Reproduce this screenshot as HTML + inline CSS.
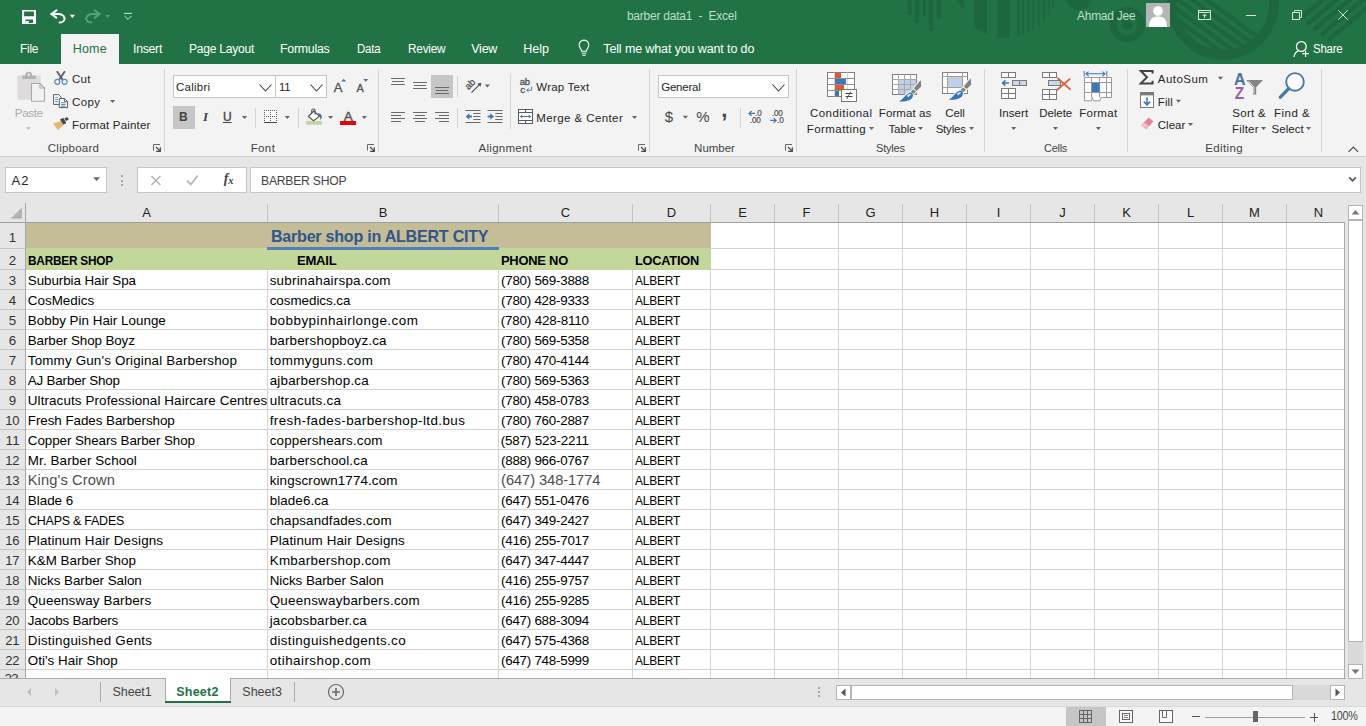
<!DOCTYPE html>
<html lang="en"><head><meta charset="utf-8"><title>barber data1 - Excel</title>
<style>
html,body{margin:0;padding:0;}
body{width:1366px;height:726px;overflow:hidden;position:relative;background:#e6e6e6;font-family:'Liberation Sans',sans-serif;color:#262626;}
header,nav,section,main,footer{display:block;position:static;margin:0;padding:0;}
.t{position:absolute;white-space:pre;}
svg{position:absolute;overflow:visible;}
</style></head><body>
<header class="titlebar" aria-label="Title bar">
<div style="position:absolute;left:0px;top:0px;width:1366px;height:64px;background:#217346;"></div>
<svg style="left:0;top:0" width="1366" height="64" viewBox="0 0 1366 64">
<defs><clipPath id="cpA"><circle cx="1006" cy="-14" r="52"/></clipPath><clipPath id="cpB"><circle cx="1223" cy="3.6" r="46.5"/></clipPath><clipPath id="cpT"><rect x="0" y="0" width="1366" height="64"/></clipPath></defs>
<g fill="#1e673e" clip-path="url(#cpT)">
<rect x="908" y="0" width="3.5" height="15"/><rect x="915" y="0" width="4" height="23"/><rect x="923" y="0" width="3" height="16"/><rect x="929" y="0" width="4" height="31"/><rect x="937" y="0" width="4" height="19"/>
<path d="M956 0 L964 0 L964 10 Z"/>
<g clip-path="url(#cpA)"><rect x="974" y="0" width="13" height="40"/><rect x="997.5" y="0" width="12.5" height="40"/>
<rect x="1017.5" y="0" width="2" height="40"/><rect x="1022" y="0" width="2" height="40"/><rect x="1027.5" y="0" width="2" height="40"/><rect x="1032.5" y="0" width="1.6" height="40"/><rect x="1038" y="0" width="1.6" height="40"/><rect x="1043.5" y="0" width="1.6" height="40"/><rect x="1048.5" y="0" width="1.5" height="40"/><rect x="1052.5" y="0" width="1.4" height="40"/></g>
<circle cx="1079" cy="-3" r="13"/>
<circle cx="1127.2" cy="24.6" r="14" fill="none" stroke="#1e673e" stroke-width="7"/><circle cx="1127.2" cy="24.6" r="5.5"/>
<circle cx="1223" cy="3.6" r="51" fill="none" stroke="#1e673e" stroke-width="10"/>
<g clip-path="url(#cpB)" stroke="#1e673e" stroke-width="4.6" fill="none"><path d="M1170.6 -26.4 L1267.7 44.1 M1165.7 -19.6 L1262.8 50.9 M1160.8 -12.8 L1257.8 57.7 M1155.8 -6.0 L1252.9 64.5 M1150.9 0.8 L1248.0 71.3"/></g>
<g stroke="#1e673e" stroke-width="4.6" fill="none"><path d="M1300.0 19.0 L1368.9 -38.9 M1307.1 24.3 L1376.0 -33.5 M1314.1 29.6 L1383.1 -28.2 M1321.2 34.9 L1390.1 -22.9 M1328.2 40.2 L1397.2 -17.6"/></g>
</g></svg>
<svg style="left:22px;top:10px" width="14" height="14" viewBox="0 0 14 14"><path fill-rule="evenodd" fill="#ffffff" d="M0 0 H14 V14 H0 Z M2.1 1.4 V6.2 H12 V1.4 Z M3.4 9.6 V12.9 H11 V9.6 Z"/><rect x="3.4" y="11" width="3.4" height="1.9" fill="#ffffff"/></svg>
<svg style="left:50px;top:9px" width="26" height="16" viewBox="0 0 26 16"><path d="M1.4 5 H8.6 C12.8 5 15.4 8 14.3 11 C13.5 13 11.6 13.5 9.6 13.5" fill="none" stroke="#ffffff" stroke-width="2" stroke-linecap="round"/><path d="M6.5 1.4 L1.3 5 L6.3 8.6" fill="none" stroke="#ffffff" stroke-width="2" stroke-linecap="round" stroke-linejoin="round"/><path d="M19.8 5.8 h5.2 l-2.6 3.2 z" fill="#ffffff"/></svg>
<svg style="left:85px;top:9px" width="26" height="16" viewBox="0 0 26 16"><path d="M14.6 5 H7.2 C3 5 0.4 8 1.5 11 C2.3 13 4.2 13.5 6.4 13.5" fill="none" stroke="#58a07b" stroke-width="2" stroke-linecap="round"/><path d="M9.6 1.4 L14.8 5 L9.8 8.6" fill="none" stroke="#58a07b" stroke-width="2" stroke-linecap="round" stroke-linejoin="round"/><path d="M20.2 6 h4.8 l-2.4 3 z" fill="#58a07b"/></svg>
<svg style="left:123px;top:12px" width="10" height="9" viewBox="0 0 10 9"><path d="M1 1.4 H9" stroke="#cfe5d8" stroke-width="1"/><path d="M1.6 4 L5 7.4 L8.4 4" fill="none" stroke="#cfe5d8" stroke-width="1"/></svg>
<svg style="left:1146px;top:3px" width="24" height="24" viewBox="0 0 24 24"><rect width="24" height="24" fill="#b5b5b5"/><circle cx="12" cy="8" r="4.8" fill="#fff"/><path d="M3 24 C3 15.5 7 13.6 12 13.6 C17 13.6 21 15.5 21 24 Z" fill="#fff"/></svg>
<svg style="left:1198px;top:10px" width="13" height="10" viewBox="0 0 13 10"><rect x="0.5" y="0.5" width="12" height="9" fill="none" stroke="#d3e6da" stroke-width="1"/><path d="M0.5 2.5 H12.5" stroke="#d3e6da" stroke-width="1"/><path d="M6.5 8 V4.2 M4.6 6 L6.5 4.1 L8.4 6" fill="none" stroke="#d3e6da" stroke-width="1"/></svg>
<div style="position:absolute;left:1246px;top:15px;width:10px;height:1px;background:#d3e6da;"></div>
<svg style="left:1292px;top:10px" width="10" height="10" viewBox="0 0 10 10"><rect x="0.5" y="2.5" width="7" height="7" fill="none" stroke="#d3e6da" stroke-width="1"/><path d="M2.5 2.5 V0.5 H9.5 V7.5 H7.5" fill="none" stroke="#d3e6da" stroke-width="1"/></svg>
<svg style="left:1338px;top:10px" width="10" height="10" viewBox="0 0 10 10"><path d="M0.3 0.3 L9.7 9.7 M9.7 0.3 L0.3 9.7" stroke="#d3e6da" stroke-width="1"/></svg>
<span class="t" style="left:626.88px;top:8.00px;font-size:12px;line-height:16px;letter-spacing:-0.222px;color:#b9dfc9;">barber data1  -  Excel</span>
<span class="t" style="left:1076.78px;top:8.00px;font-size:12px;line-height:16px;letter-spacing:-0.250px;transform:scaleX(0.9979);transform-origin:0 50%;color:#b9dfc9;">Ahmad Jee</span>
</header>
<nav class="tabs" aria-label="Ribbon tabs">
<div style="position:absolute;left:61px;top:34px;width:58px;height:30px;background:#f3f3f3;"></div>
<svg style="left:577px;top:39px" width="14" height="18" viewBox="0 0 14 18"><path d="M4.6 12.2 C4.6 10 2.2 9 2.2 5.9 A4.8 4.8 0 0 1 11.8 5.9 C11.8 9 9.4 10 9.4 12.2 Z" fill="none" stroke="#ffffff" stroke-width="1.1"/><path d="M4.8 14.2 H9.2 M5.3 16.2 H8.7" stroke="#ffffff" stroke-width="1.1"/></svg>
<svg style="left:1293px;top:40px" width="17" height="18" viewBox="0 0 17 18"><circle cx="8.3" cy="6.5" r="4.9" fill="none" stroke="#ffffff" stroke-width="1.2"/><path d="M1 17 C1.4 13.4 3.4 11.6 5.4 10.8" fill="none" stroke="#ffffff" stroke-width="1.2"/><path d="M12.6 10.4 V17 M9.3 13.7 H15.9" stroke="#ffffff" stroke-width="1.2"/></svg>
<span class="t" style="left:19.75px;top:41.00px;font-size:12.5px;line-height:16px;letter-spacing:-0.250px;transform:scaleX(0.9494);transform-origin:0 50%;color:#ffffff;">File</span>
<span class="t" style="left:72.65px;top:41.00px;font-size:12.5px;line-height:16px;letter-spacing:0.227px;color:#217346;">Home</span>
<span class="t" style="left:132.85px;top:41.00px;font-size:12.5px;line-height:16px;letter-spacing:-0.250px;transform:scaleX(0.9770);transform-origin:0 50%;color:#ffffff;">Insert</span>
<span class="t" style="left:188.85px;top:41.00px;font-size:12.5px;line-height:16px;letter-spacing:-0.250px;transform:scaleX(0.9664);transform-origin:0 50%;color:#ffffff;">Page Layout</span>
<span class="t" style="left:280.45px;top:41.00px;font-size:12.5px;line-height:16px;letter-spacing:-0.250px;transform:scaleX(0.9877);transform-origin:0 50%;color:#ffffff;">Formulas</span>
<span class="t" style="left:356.75px;top:41.00px;font-size:12.5px;line-height:16px;letter-spacing:-0.250px;transform:scaleX(0.9208);transform-origin:0 50%;color:#ffffff;">Data</span>
<span class="t" style="left:407.75px;top:41.00px;font-size:12.5px;line-height:16px;letter-spacing:-0.250px;transform:scaleX(0.9465);transform-origin:0 50%;color:#ffffff;">Review</span>
<span class="t" style="left:471.25px;top:41.00px;font-size:12.5px;line-height:16px;letter-spacing:-0.250px;color:#ffffff;">View</span>
<span class="t" style="left:523.25px;top:41.00px;font-size:12.5px;line-height:16px;letter-spacing:-0.031px;color:#ffffff;">Help</span>
<span class="t" style="left:603.25px;top:41.00px;font-size:12.5px;line-height:16px;letter-spacing:-0.120px;color:#ffffff;">Tell me what you want to do</span>
<span class="t" style="left:1312.75px;top:41.00px;font-size:12.5px;line-height:16px;letter-spacing:-0.250px;transform:scaleX(0.9155);transform-origin:0 50%;color:#ffffff;">Share</span>
</nav>
<section class="ribbon" aria-label="Ribbon">
<div style="position:absolute;left:0px;top:64px;width:1366px;height:92px;background:#f3f3f3;"></div>
<div style="position:absolute;left:0px;top:156px;width:1366px;height:1px;background:#d2d2d2;"></div>
<div style="position:absolute;left:173px;top:75px;width:103px;height:23px;background:#fff;box-sizing:border-box;border:1px solid #c6c6c6;"></div>
<div style="position:absolute;left:276px;top:75px;width:51px;height:23px;background:#fff;box-sizing:border-box;border:1px solid #c6c6c6;border-left:none;"></div>
<div style="position:absolute;left:275px;top:76px;width:1px;height:21px;background:#c6c6c6;"></div>
<div style="position:absolute;left:173px;top:106px;width:22px;height:23px;background:#c6c6c6;"></div>
<div style="position:absolute;left:658px;top:75px;width:131px;height:23px;background:#fff;box-sizing:border-box;border:1px solid #c6c6c6;"></div>
<div style="position:absolute;left:164px;top:69px;width:1px;height:83px;background:#d4d4d4;"></div>
<div style="position:absolute;left:378px;top:69px;width:1px;height:83px;background:#d4d4d4;"></div>
<div style="position:absolute;left:649px;top:69px;width:1px;height:83px;background:#d4d4d4;"></div>
<div style="position:absolute;left:796px;top:69px;width:1px;height:83px;background:#d4d4d4;"></div>
<div style="position:absolute;left:984px;top:69px;width:1px;height:83px;background:#d4d4d4;"></div>
<div style="position:absolute;left:1127px;top:69px;width:1px;height:83px;background:#d4d4d4;"></div>
<div style="position:absolute;left:1321px;top:69px;width:1px;height:83px;background:#d4d4d4;"></div>
<div style="position:absolute;left:255px;top:108px;width:1px;height:20px;background:#d4d4d4;"></div>
<div style="position:absolute;left:298px;top:108px;width:1px;height:20px;background:#d4d4d4;"></div>
<div style="position:absolute;left:457px;top:108px;width:1px;height:20px;background:#d4d4d4;"></div>
<div style="position:absolute;left:740px;top:108px;width:1px;height:20px;background:#d4d4d4;"></div>
<div style="position:absolute;left:457px;top:76px;width:1px;height:21px;background:#d4d4d4;"></div>
<div style="position:absolute;left:510px;top:74px;width:1px;height:55px;background:#d4d4d4;"></div>
<div style="position:absolute;left:431px;top:75px;width:22px;height:23px;background:#c6c6c6;"></div>
<svg style="left:17px;top:71px" width="29" height="32" viewBox="0 0 29 32"><rect x="0.3" y="4.4" width="23.4" height="24.4" rx="0.6" fill="#dddbdb"/><path d="M5.4 8 V4.6 H8.4 V3.6 A3.2 2.8 0 0 1 15 3.6 V4.6 H18.8 V8 Z" fill="#b4b2b2"/><circle cx="11.7" cy="3.8" r="1.2" fill="#eeeeee"/>
<path d="M14.5 12.5 H23 L27.5 17 V30.3 H14.5 Z" fill="#f3f2f2" stroke="#aaa8a8" stroke-width="1.1"/><path d="M23 12.5 V17 H27.5" fill="none" stroke="#aaa8a8" stroke-width="1.1"/></svg>
<svg style="left:25px;top:126px" width="8" height="6" viewBox="0 0 8 6"><path d="M1.30 1.30 h4.4 l-2.2 2.4 z" fill="#b5b5b5"/></svg>
<svg style="left:53px;top:70px" width="16" height="16" viewBox="0 0 16 16"><path d="M3.9 1.2 L9.6 9.6 M11.9 1.2 L6.2 9.6" stroke="#636363" stroke-width="1.9" fill="none"/><circle cx="4.3" cy="11.8" r="2.5" fill="none" stroke="#4f8bcc" stroke-width="1.15"/><circle cx="11.6" cy="11.8" r="2.5" fill="none" stroke="#4f8bcc" stroke-width="1.15"/></svg>
<svg style="left:52px;top:93px" width="17" height="16" viewBox="0 0 17 16"><path d="M1.6 1.6 H6.6 L9.2 4.2 V11.4 H1.6 Z" fill="#fff" stroke="#5a5a5a" stroke-width="1"/><path d="M3.2 4.6 H5.6 M3.2 6.6 H6 M3.2 8.6 H6" stroke="#3b7cc2" stroke-width="0.9"/>
<path d="M7.3 5.5 H12.6 L15.5 8.4 V14.6 H7.3 Z" fill="#fff" stroke="#5a5a5a" stroke-width="1"/><path d="M12.4 5.6 V8.6 H15.4" fill="none" stroke="#5a5a5a" stroke-width="0.9"/><path d="M9 9.8 H13.6 M9 11.6 H13.6 M9 13.2 H13.6" stroke="#3b7cc2" stroke-width="0.9"/></svg>
<svg style="left:109px;top:99px" width="8" height="6" viewBox="0 0 8 6"><path d="M1.00 1.10 h5.2 l-2.6 3 z" fill="#666"/></svg>
<svg style="left:52px;top:116px" width="18" height="15" viewBox="0 0 18 15"><path d="M1 7.6 L8.8 5.2 L11.4 9.2 L6 14 Z" fill="#e6b566"/><path d="M8 3.6 L11.2 1.8 L14.4 7 L11.2 8.8 Z" fill="#4a4a4a"/><path d="M12.4 2.6 L15.2 0.9 L16.8 3.4 L14 5.1 Z" fill="#4a4a4a"/></svg>
<svg style="left:153px;top:144px" width="8" height="8" viewBox="0 0 8 8"><path d="M0.5 6.6 V0.5 H7" fill="none" stroke="#666" stroke-width="1"/><path d="M3 3 L7 7" stroke="#444" stroke-width="1.1"/><path d="M7.3 3.2 V7.3 H3.2" fill="none" stroke="#444" stroke-width="1.2"/></svg>
<svg style="left:259px;top:83.5px" width="13" height="8" viewBox="0 0 13 8"><path d="M0.5 0.5 L6.5 7 L12.5 0.5" fill="none" stroke="#444" stroke-width="1.1"/></svg>
<svg style="left:310px;top:83.5px" width="13" height="8" viewBox="0 0 13 8"><path d="M0.5 0.5 L6.5 7 L12.5 0.5" fill="none" stroke="#444" stroke-width="1.1"/></svg>
<svg style="left:341px;top:78px" width="6" height="4" viewBox="0 0 6 4"><path d="M0.2 3.6 L2.7 0.8 L5.2 3.6 Z" fill="#4a72a8"/></svg>
<svg style="left:363px;top:78px" width="6" height="4" viewBox="0 0 6 4"><path d="M0.2 0.9 L5.4 0.9 L2.8 3.8 Z" fill="#4a72a8"/></svg>
<svg style="left:241px;top:115px" width="8" height="6" viewBox="0 0 8 6"><path d="M0.90 0.90 h5.2 l-2.6 3 z" fill="#666"/></svg>
<svg style="left:264px;top:110px" width="14" height="14" viewBox="0 0 14 14"><rect x="0" y="0" width="13" height="13" fill="#fff"/><g fill="#5a5a5a"><rect x="0" y="0" width="1" height="1"/><rect x="2" y="0" width="1" height="1"/><rect x="4" y="0" width="1" height="1"/><rect x="6" y="0" width="1" height="1"/><rect x="8" y="0" width="1" height="1"/><rect x="10" y="0" width="1" height="1"/><rect x="12" y="0" width="1" height="1"/><rect x="0" y="2" width="1" height="1"/><rect x="6" y="2" width="1" height="1"/><rect x="12" y="2" width="1" height="1"/><rect x="0" y="4" width="1" height="1"/><rect x="6" y="4" width="1" height="1"/><rect x="12" y="4" width="1" height="1"/><rect x="0" y="6" width="1" height="1"/><rect x="2" y="6" width="1" height="1"/><rect x="4" y="6" width="1" height="1"/><rect x="6" y="6" width="1" height="1"/><rect x="8" y="6" width="1" height="1"/><rect x="10" y="6" width="1" height="1"/><rect x="12" y="6" width="1" height="1"/><rect x="0" y="8" width="1" height="1"/><rect x="6" y="8" width="1" height="1"/><rect x="12" y="8" width="1" height="1"/><rect x="0" y="10" width="1" height="1"/><rect x="6" y="10" width="1" height="1"/><rect x="12" y="10" width="1" height="1"/></g><rect x="0" y="12" width="13" height="1" fill="#444"/></svg>
<svg style="left:284px;top:115px" width="8" height="6" viewBox="0 0 8 6"><path d="M0.70 0.90 h5.2 l-2.6 3 z" fill="#666"/></svg>
<svg style="left:306px;top:108px" width="17" height="18" viewBox="0 0 17 18"><rect x="0.1" y="13" width="15.9" height="3.7" fill="#c4d79b"/><path d="M2.3 8.5 L7.8 3 L13.3 8.4 L7.6 12.7 Z" fill="#fff" stroke="#555" stroke-width="1.1" stroke-linejoin="round"/><path d="M5.7 5.2 V2.7 A1.7 1.7 0 0 1 9.1 2.7 V6.6" fill="none" stroke="#555" stroke-width="1.1"/><path d="M11.6 5.2 C14.6 5 16.6 7.4 15.6 10 C15.2 11 14.8 11.6 14.3 11.9 C14.5 10.4 14.2 9.2 13.3 8.4 Z" fill="#4472b8"/></svg>
<svg style="left:327px;top:115px" width="8" height="6" viewBox="0 0 8 6"><path d="M1.00 0.90 h5.2 l-2.6 3 z" fill="#666"/></svg>
<div style="position:absolute;left:340px;top:121px;width:16px;height:4px;background:#e8000a;"></div>
<svg style="left:361px;top:115px" width="8" height="6" viewBox="0 0 8 6"><path d="M0.80 0.90 h5.2 l-2.6 3 z" fill="#666"/></svg>
<svg style="left:367px;top:144px" width="8" height="8" viewBox="0 0 8 8"><path d="M0.5 6.6 V0.5 H7" fill="none" stroke="#666" stroke-width="1"/><path d="M3 3 L7 7" stroke="#444" stroke-width="1.1"/><path d="M7.3 3.2 V7.3 H3.2" fill="none" stroke="#444" stroke-width="1.2"/></svg>
<svg style="left:391px;top:0px" width="16" height="160" viewBox="0 0 16 160"><rect x="0" y="78.0" width="14" height="1" fill="#6a6a6a"/><rect x="1" y="81.0" width="12" height="1" fill="#6a6a6a"/><rect x="0" y="84.0" width="14" height="1" fill="#6a6a6a"/></svg>
<svg style="left:413px;top:0px" width="16" height="160" viewBox="0 0 16 160"><rect x="0" y="82.0" width="14" height="1" fill="#6a6a6a"/><rect x="1" y="85.0" width="12" height="1" fill="#6a6a6a"/><rect x="0" y="88.0" width="14" height="1" fill="#6a6a6a"/></svg>
<svg style="left:435px;top:0px" width="16" height="160" viewBox="0 0 16 160"><rect x="0" y="87.0" width="14" height="1" fill="#6a6a6a"/><rect x="1" y="90.0" width="12" height="1" fill="#6a6a6a"/><rect x="0" y="93.0" width="14" height="1" fill="#6a6a6a"/></svg>
<svg style="left:391px;top:0px" width="16" height="160" viewBox="0 0 16 160"><rect x="0" y="112.0" width="14" height="1" fill="#6a6a6a"/><rect x="0" y="115.0" width="10" height="1" fill="#6a6a6a"/><rect x="0" y="118.0" width="14" height="1" fill="#6a6a6a"/><rect x="0" y="121.0" width="10" height="1" fill="#6a6a6a"/></svg>
<svg style="left:413px;top:0px" width="16" height="160" viewBox="0 0 16 160"><rect x="0" y="112.0" width="14" height="1" fill="#6a6a6a"/><rect x="2" y="115.0" width="10" height="1" fill="#6a6a6a"/><rect x="0" y="118.0" width="14" height="1" fill="#6a6a6a"/><rect x="2" y="121.0" width="10" height="1" fill="#6a6a6a"/></svg>
<svg style="left:435px;top:0px" width="16" height="160" viewBox="0 0 16 160"><rect x="0" y="112.0" width="14" height="1" fill="#6a6a6a"/><rect x="4" y="115.0" width="10" height="1" fill="#6a6a6a"/><rect x="0" y="118.0" width="14" height="1" fill="#6a6a6a"/><rect x="4" y="121.0" width="10" height="1" fill="#6a6a6a"/></svg>
<svg style="left:464px;top:77px" width="20" height="18" viewBox="0 0 20 18"><path d="M7.5 15.6 L16.2 6.9" stroke="#505050" stroke-width="1.2"/><path d="M17.4 5.7 L13.4 6.6 L16.5 9.7 Z" fill="#505050"/><text x="0" y="0" transform="translate(4.6 13.2) rotate(-45)" font-family="Liberation Sans,sans-serif" font-size="9.6" fill="#505050" stroke="#505050" stroke-width="0.25">ab</text></svg>
<svg style="left:484px;top:84px" width="8" height="6" viewBox="0 0 8 6"><path d="M0.80 0.60 h5.2 l-2.6 3 z" fill="#666"/></svg>
<svg style="left:519px;top:78px" width="15" height="16" viewBox="0 0 15 16"><text x="0.8" y="7.4" font-family="Liberation Sans,sans-serif" font-size="9.6" fill="#505050" stroke="#505050" stroke-width="0.3" letter-spacing="-0.3">ab</text><text x="1.2" y="14.6" font-family="Liberation Sans,sans-serif" font-size="9.6" fill="#505050" stroke="#505050" stroke-width="0.3">c</text><path d="M12.6 8.6 V12.2 H8.2" fill="none" stroke="#3b7cc2" stroke-width="1"/><path d="M9.6 10.4 L7.6 12.2 L9.6 14" fill="none" stroke="#3b7cc2" stroke-width="1"/></svg>
<svg style="left:465px;top:109px" width="17" height="15" viewBox="0 0 17 15"><path d="M0.5 1.5 H15.5 M8.3 4.5 H15.5 M8.3 7.5 H15.5 M8.3 10.5 H15.5 M0.5 13.5 H15.5" stroke="#6a6a6a" stroke-width="1"/><path d="M0.6 7.5 L4.4 4.2 V6.5 H7 V8.5 H4.4 V10.8 Z" fill="#4478b8"/></svg>
<svg style="left:487px;top:109px" width="17" height="15" viewBox="0 0 17 15"><path d="M0.5 1.5 H15.5 M8.3 4.5 H15.5 M8.3 7.5 H15.5 M8.3 10.5 H15.5 M0.5 13.5 H15.5" stroke="#6a6a6a" stroke-width="1"/><path d="M7 7.5 L3.2 4.2 V6.5 H0.6 V8.5 H3.2 V10.8 Z" fill="#4478b8"/></svg>
<svg style="left:518px;top:109px" width="15" height="15" viewBox="0 0 15 15"><rect x="0.5" y="0.5" width="14" height="14" fill="#fff" stroke="#5a5a5a" stroke-width="1"/><path d="M0.5 3.5 H14.5 M0.5 11.5 H14.5 M7.5 0.5 V3.5 M7.5 11.5 V14.5" stroke="#5a5a5a" stroke-width="1"/><path d="M2.6 7.5 H12.4" stroke="#4a6fa8" stroke-width="1"/><path d="M2 7.5 L4.2 5.6 V9.4 Z M13 7.5 L10.8 5.6 V9.4 Z" fill="#4a6fa8"/></svg>
<svg style="left:631px;top:115px" width="8" height="6" viewBox="0 0 8 6"><path d="M0.90 0.90 h5.2 l-2.6 3 z" fill="#666"/></svg>
<svg style="left:638px;top:144px" width="8" height="8" viewBox="0 0 8 8"><path d="M0.5 6.6 V0.5 H7" fill="none" stroke="#666" stroke-width="1"/><path d="M3 3 L7 7" stroke="#444" stroke-width="1.1"/><path d="M7.3 3.2 V7.3 H3.2" fill="none" stroke="#444" stroke-width="1.2"/></svg>
<svg style="left:772px;top:84px" width="13" height="8" viewBox="0 0 13 8"><path d="M0.5 0.5 L6.5 7 L12.5 0.5" fill="none" stroke="#444" stroke-width="1.1"/></svg>
<svg style="left:682px;top:115px" width="8" height="6" viewBox="0 0 8 6"><path d="M0.80 0.80 h5.2 l-2.6 3 z" fill="#666"/></svg>
<svg style="left:748px;top:110px" width="16" height="14" viewBox="0 0 16 14"><path d="M7 3.4 H1.2 M3.6 1 L1 3.4 L3.6 5.8" fill="none" stroke="#3d77bb" stroke-width="1.2"/><text x="7" y="6.2" font-family="Liberation Sans,sans-serif" font-size="8.2" fill="#505050" stroke="#505050" stroke-width="0.2">.0</text><text x="2" y="13.4" font-family="Liberation Sans,sans-serif" font-size="8.2" fill="#505050" stroke="#505050" stroke-width="0.2" letter-spacing="-0.3">.00</text></svg>
<svg style="left:770px;top:110px" width="16" height="14" viewBox="0 0 16 14"><text x="2" y="6.2" font-family="Liberation Sans,sans-serif" font-size="8.2" fill="#505050" stroke="#505050" stroke-width="0.2" letter-spacing="-0.3">.00</text><path d="M0.2 10.4 H6 M3.6 8 L6.2 10.4 L3.6 12.8" fill="none" stroke="#3d77bb" stroke-width="1.2"/><text x="7" y="13.4" font-family="Liberation Sans,sans-serif" font-size="8.2" fill="#505050" stroke="#505050" stroke-width="0.2">.0</text></svg>
<svg style="left:785px;top:144px" width="8" height="8" viewBox="0 0 8 8"><path d="M0.5 6.6 V0.5 H7" fill="none" stroke="#666" stroke-width="1"/><path d="M3 3 L7 7" stroke="#444" stroke-width="1.1"/><path d="M7.3 3.2 V7.3 H3.2" fill="none" stroke="#444" stroke-width="1.2"/></svg>
<svg style="left:827px;top:72px" width="31" height="30" viewBox="0 0 31 30"><rect x="0.5" y="0.5" width="27" height="24" fill="#fff" stroke="#808080" stroke-width="1"/>
<path d="M7.5 0.5 V24.5 M20.5 0.5 V24.5" stroke="#d6d6d6" stroke-width="1"/><path d="M0.5 6.5 H27.5 M0.5 12.5 H27.5 M0.5 18.5 H27.5" stroke="#909090" stroke-width="1"/>
<rect x="8" y="1" width="6" height="5" fill="#dd5a33"/><rect x="8" y="7" width="11" height="5" fill="#3d77bb"/><rect x="8" y="13" width="9" height="5" fill="#dd5a33"/><rect x="8" y="19" width="4" height="5" fill="#3d77bb"/>
<rect x="14.5" y="17.5" width="15" height="12" fill="#fff" stroke="#7a7a7a" stroke-width="1"/><path d="M18.5 21.5 H25.5 M18.5 24.5 H25.5" stroke="#444" stroke-width="1"/><path d="M23.8 19.6 L19.8 27" stroke="#444" stroke-width="0.9"/></svg>
<svg style="left:868px;top:126px" width="8" height="6" viewBox="0 0 8 6"><path d="M0.90 1.00 h5.2 l-2.6 3 z" fill="#666"/></svg>
<svg style="left:892px;top:72px" width="32" height="31" viewBox="0 0 32 31"><rect x="0.5" y="2.5" width="24" height="20" fill="#fff" stroke="#808080" stroke-width="1"/><rect x="7" y="8" width="17" height="14" fill="#bdd0e6"/>
<path d="M6.5 2.5 V22.5 M12.5 2.5 V22.5 M18.5 2.5 V22.5 M0.5 7.5 H24.5 M0.5 12.5 H24.5 M0.5 17.5 H24.5" stroke="#a9a9a9" stroke-width="1"/><path d="M28.7 8.0 L29.2 14.5 L24.6 18.9 L21.9 16.2 Z M21.3 17.2 L24.0 19.7 L21.3 21.9 L18.8 19.6 Z M6.8 29.5 C11.5 27.2 13.5 21.7 18.1 20.4 C21.1 20.6 21.9 23.6 19.9 26.2 C17.5 29.0 12.5 29.8 6.8 29.5 Z" fill="#f3f3f3" stroke="#f3f3f3" stroke-width="2.2" stroke-linejoin="round"/><path d="M28.7 8.0 L29.2 14.5 L24.6 18.9 L21.9 16.2 Z" fill="#808080"/><path d="M21.3 17.2 L24.0 19.7 L21.3 21.9 L18.8 19.6 Z" fill="#808080"/><path d="M6.8 29.5 C11.5 27.2 13.5 21.7 18.1 20.4 C21.1 20.6 21.9 23.6 19.9 26.2 C17.5 29.0 12.5 29.8 6.8 29.5 Z" fill="#3573bd"/><path d="M14.9 23.8 C16.3 22.0 18.3 21.6 19.7 22.8 C18.3 22.8 17.1 23.8 16.5 25.4 Z" fill="#e4edf8"/></svg>
<svg style="left:917px;top:126px" width="8" height="6" viewBox="0 0 8 6"><path d="M1.00 1.00 h5.2 l-2.6 3 z" fill="#666"/></svg>
<svg style="left:942px;top:72px" width="32" height="31" viewBox="0 0 32 31"><rect x="0.5" y="0.5" width="25" height="21" fill="#fff" stroke="#808080" stroke-width="1"/><rect x="6" y="5" width="14" height="10" fill="#bdd0e6"/>
<path d="M5.5 0.5 V21.5 M20.5 0.5 V21.5 M0.5 4.5 H25.5 M0.5 15.5 H25.5" stroke="#a0a0a0" stroke-width="1"/><path d="M28.7 6.2 L29.2 12.7 L24.6 17.1 L21.9 14.4 Z M21.3 15.4 L24.0 17.9 L21.3 20.1 L18.8 17.8 Z M6.8 27.7 C11.5 25.4 13.5 19.9 18.1 18.6 C21.1 18.8 21.9 21.8 19.9 24.4 C17.5 27.2 12.5 28.0 6.8 27.7 Z" fill="#f3f3f3" stroke="#f3f3f3" stroke-width="2.2" stroke-linejoin="round"/><path d="M28.7 6.2 L29.2 12.7 L24.6 17.1 L21.9 14.4 Z" fill="#808080"/><path d="M21.3 15.4 L24.0 17.9 L21.3 20.1 L18.8 17.8 Z" fill="#808080"/><path d="M6.8 27.7 C11.5 25.4 13.5 19.9 18.1 18.6 C21.1 18.8 21.9 21.8 19.9 24.4 C17.5 27.2 12.5 28.0 6.8 27.7 Z" fill="#3573bd"/><path d="M14.9 22.0 C16.3 20.2 18.3 19.8 19.7 21.0 C18.3 21.0 17.1 22.0 16.5 23.6 Z" fill="#e4edf8"/></svg>
<svg style="left:968px;top:126px" width="8" height="6" viewBox="0 0 8 6"><path d="M1.00 1.00 h5.2 l-2.6 3 z" fill="#666"/></svg>
<svg style="left:1001px;top:72px" width="27" height="28" viewBox="0 0 27 28"><rect x="0.5" y="0.5" width="14" height="5" fill="#fff" stroke="#7a7a7a" stroke-width="1"/><path d="M7.5 0.5 V5.5" stroke="#7a7a7a"/>
<rect x="11.5" y="8.5" width="14" height="5" fill="#c8d8ea" stroke="#7a7a7a" stroke-width="1"/><path d="M18.5 8.5 V13.5" stroke="#7a7a7a"/>
<path d="M8 11 H1.6 M4.4 8.4 L1.6 11 L4.4 13.6" fill="none" stroke="#3d77bb" stroke-width="1.6"/>
<rect x="0.5" y="16.5" width="14" height="10" fill="#fff" stroke="#7a7a7a" stroke-width="1"/><path d="M7.5 16.5 V26.5 M0.5 21.5 H14.5" stroke="#7a7a7a"/></svg>
<svg style="left:1010px;top:126px" width="8" height="6" viewBox="0 0 8 6"><path d="M1.10 1.10 h5.2 l-2.6 3 z" fill="#666"/></svg>
<svg style="left:1042px;top:72px" width="30" height="29" viewBox="0 0 30 29"><rect x="0.5" y="0.5" width="14" height="5" fill="#fff" stroke="#7a7a7a" stroke-width="1"/><path d="M7.5 0.5 V5.5" stroke="#7a7a7a"/>
<rect x="6.5" y="8.5" width="12" height="5" fill="#c8d8ea" stroke="#7a7a7a" stroke-width="1"/>
<rect x="0.5" y="17.5" width="14" height="10" fill="#fff" stroke="#7a7a7a" stroke-width="1"/><path d="M7.5 17.5 V27.5 M0.5 22.5 H14.5" stroke="#7a7a7a"/>
<path d="M15.4 6 L28.6 17.6 M28.2 6.6 L15 18" stroke="#d9613c" stroke-width="1.8" fill="none"/></svg>
<svg style="left:1052px;top:126px" width="8" height="6" viewBox="0 0 8 6"><path d="M0.80 1.10 h5.2 l-2.6 3 z" fill="#666"/></svg>
<svg style="left:1083px;top:70px" width="30" height="33" viewBox="0 0 30 33"><path d="M1.2 1 V6.6 M23.8 1 V6.6" stroke="#3d77bb" stroke-width="1"/><path d="M3 3.8 H22 M5.6 1.6 L3 3.8 L5.6 6 M19.4 1.6 L22 3.8 L19.4 6" fill="none" stroke="#3d77bb" stroke-width="1.1"/>
<path d="M1.5 7.5 H28.5 V27.5 H18 L17 30.8 H10.6 L9.4 27.5 L8.4 30.8 H1.5 Z" fill="#fff" stroke="#9a9a9a" stroke-width="1"/>
<path d="M8.5 7.5 V27.5 M16.5 7.5 V27.5 M23.5 7.5 V27.5 M1.5 12.5 H28.5 M1.5 22.5 H28.5" stroke="#9a9a9a" stroke-width="1"/><rect x="9" y="13" width="7.5" height="9" fill="#3d77bb"/></svg>
<svg style="left:1095px;top:126px" width="8" height="6" viewBox="0 0 8 6"><path d="M0.80 1.10 h5.2 l-2.6 3 z" fill="#666"/></svg>
<svg style="left:1139px;top:70px" width="15" height="15" viewBox="0 0 15 15"><path d="M13.6 3.6 V1 H1.8 L8 7.2 L1.8 13.4 H13.6 V10.8" fill="none" stroke="#444" stroke-width="2" stroke-linejoin="miter"/></svg>
<svg style="left:1217px;top:76px" width="8" height="6" viewBox="0 0 8 6"><path d="M0.90 0.70 h5.2 l-2.6 3 z" fill="#666"/></svg>
<svg style="left:1140px;top:92px" width="15" height="17" viewBox="0 0 15 17"><rect x="0.5" y="0.5" width="13" height="15" fill="#fff" stroke="#7a7a7a" stroke-width="1"/><rect x="0" y="0" width="14" height="3.4" fill="#7a7a7a"/><path d="M7 5.6 V12.6 M3.8 9.6 L7 12.8 L10.2 9.6" fill="none" stroke="#3d77bb" stroke-width="1.6"/></svg>
<svg style="left:1175px;top:99px" width="8" height="6" viewBox="0 0 8 6"><path d="M0.90 0.70 h5.2 l-2.6 3 z" fill="#666"/></svg>
<svg style="left:1140px;top:117px" width="15" height="14" viewBox="0 0 15 14"><path d="M8.6 0.6 L13.4 4.2 L6.6 12.2 L1.2 8.4 Z" fill="#e77f97"/><path d="M3.9 5.2 L9.2 9.1 L6.6 12.2 L1.2 8.4 Z" fill="#f4b9c6"/></svg>
<svg style="left:1187px;top:122px" width="8" height="6" viewBox="0 0 8 6"><path d="M0.90 1.00 h5.2 l-2.6 3 z" fill="#666"/></svg>
<svg style="left:1233px;top:72px" width="32" height="29" viewBox="0 0 32 29"><text x="1" y="12.5" font-family="Liberation Sans,sans-serif" font-size="16" font-weight="700" fill="#4472a8">A</text><text x="1.7" y="26.6" font-family="Liberation Sans,sans-serif" font-size="16" font-weight="700" fill="#9a5bb2" textLength="9.4" lengthAdjust="spacingAndGlyphs">Z</text>
<path d="M13.2 8 H30 L23.2 15.2 V22.6 H20 V15.2 Z" fill="#858585"/><path d="M15.4 9.2 L20.9 15 V21.6" fill="none" stroke="#f3f3f3" stroke-width="0.9"/></svg>
<svg style="left:1260px;top:126px" width="8" height="6" viewBox="0 0 8 6"><path d="M0.90 0.90 h5.2 l-2.6 3 z" fill="#666"/></svg>
<svg style="left:1277px;top:70px" width="32" height="32" viewBox="0 0 32 32"><circle cx="18" cy="11.9" r="8.8" fill="#fdfdfd" stroke="#4678b2" stroke-width="1.9"/><path d="M11.4 18.8 L3.4 27.2" stroke="#4678b2" stroke-width="3.4" stroke-linecap="round"/></svg>
<svg style="left:1305px;top:126px" width="8" height="6" viewBox="0 0 8 6"><path d="M1.00 0.90 h5.2 l-2.6 3 z" fill="#666"/></svg>
<svg style="left:1348px;top:146px" width="11" height="7" viewBox="0 0 11 7"><path d="M0.6 5.8 L5.3 1 L10 5.8" fill="none" stroke="#444" stroke-width="1.1"/></svg>
<span class="t" style="left:72.01px;top:72.00px;font-size:11.5px;line-height:15px;letter-spacing:0.264px;">Cut</span>
<span class="t" style="left:72.01px;top:95.00px;font-size:11.5px;line-height:15px;letter-spacing:0.392px;">Copy</span>
<span class="t" style="left:72.01px;top:118.00px;font-size:11.5px;line-height:15px;letter-spacing:0.175px;">Format Painter</span>
<span class="t" style="left:14.71px;top:106.00px;font-size:11.5px;line-height:15px;letter-spacing:-0.247px;color:#adabab;">Paste</span>
<span class="t" style="left:47.81px;top:141.00px;font-size:11.5px;line-height:15px;letter-spacing:0.238px;color:#444444;">Clipboard</span>
<span class="t" style="left:250.71px;top:141.00px;font-size:11.5px;line-height:15px;letter-spacing:0.373px;color:#444444;">Font</span>
<span class="t" style="left:478.61px;top:141.00px;font-size:11.5px;line-height:15px;letter-spacing:0.262px;color:#444444;">Alignment</span>
<span class="t" style="left:694.11px;top:141.00px;font-size:11.5px;line-height:15px;letter-spacing:-0.014px;color:#444444;">Number</span>
<span class="t" style="left:875.71px;top:141.00px;font-size:11.5px;line-height:15px;letter-spacing:-0.250px;transform:scaleX(0.9620);transform-origin:0 50%;color:#444444;">Styles</span>
<span class="t" style="left:1044.01px;top:141.00px;font-size:11.5px;line-height:15px;letter-spacing:-0.250px;transform:scaleX(0.9500);transform-origin:0 50%;color:#444444;">Cells</span>
<span class="t" style="left:1205.31px;top:141.00px;font-size:11.5px;line-height:15px;letter-spacing:0.377px;color:#444444;">Editing</span>
<span class="t" style="left:176.01px;top:80.00px;font-size:11.5px;line-height:15px;letter-spacing:0.240px;">Calibri</span>
<span class="t" style="left:278.81px;top:80.00px;font-size:11.5px;line-height:15px;letter-spacing:-0.250px;transform:scaleX(0.9856);transform-origin:0 50%;">11</span>
<span class="t" style="left:179.06px;top:109.00px;font-size:12px;line-height:16px;font-weight:700;color:#444;">B</span>
<span class="t" style="left:203.07px;top:108.00px;font-size:13px;line-height:17px;font-weight:700;font-style:italic;color:#444;font-family:'Liberation Serif',serif;">I</span>
<span class="t" style="left:222.96px;top:109.00px;font-size:12px;line-height:16px;color:#444;text-decoration:underline;-webkit-text-stroke:0.35px #444;">U</span>
<span class="t" style="left:536.31px;top:80.00px;font-size:11.5px;line-height:15px;letter-spacing:0.184px;">Wrap Text</span>
<span class="t" style="left:536.31px;top:111.00px;font-size:11.5px;line-height:15px;letter-spacing:0.404px;">Merge &amp; Center</span>
<span class="t" style="left:661.21px;top:80.00px;font-size:11.5px;line-height:15px;letter-spacing:-0.214px;">General</span>
<span class="t" style="left:664.70px;top:107.00px;font-size:15px;line-height:20px;color:#444;">$</span>
<span class="t" style="left:696.30px;top:107.00px;font-size:15px;line-height:20px;color:#444;">%</span>
<span class="t" style="left:721.18px;top:95.00px;font-size:22px;line-height:29px;font-weight:700;color:#444;">,</span>
<span class="t" style="left:809.98px;top:106.00px;font-size:11.5px;line-height:15px;letter-spacing:0.449px;">Conditional</span>
<span class="t" style="left:806.68px;top:122.00px;font-size:11.5px;line-height:15px;letter-spacing:0.452px;">Formatting</span>
<span class="t" style="left:878.83px;top:106.00px;font-size:11.5px;line-height:15px;letter-spacing:0.071px;">Format as</span>
<span class="t" style="left:888.43px;top:122.00px;font-size:11.5px;line-height:15px;letter-spacing:-0.091px;">Table</span>
<span class="t" style="left:945.13px;top:106.00px;font-size:11.5px;line-height:15px;letter-spacing:-0.026px;">Cell</span>
<span class="t" style="left:935.63px;top:122.00px;font-size:11.5px;line-height:15px;letter-spacing:-0.199px;">Styles</span>
<span class="t" style="left:998.93px;top:106.00px;font-size:11.5px;line-height:15px;letter-spacing:0.114px;">Insert</span>
<span class="t" style="left:1039.13px;top:106.00px;font-size:11.5px;line-height:15px;letter-spacing:-0.023px;">Delete</span>
<span class="t" style="left:1079.28px;top:106.00px;font-size:11.5px;line-height:15px;letter-spacing:0.283px;">Format</span>
<span class="t" style="left:1157.81px;top:72.00px;font-size:11.5px;line-height:15px;letter-spacing:0.470px;">AutoSum</span>
<span class="t" style="left:1157.81px;top:95.00px;font-size:11.5px;line-height:15px;letter-spacing:0.111px;">Fill</span>
<span class="t" style="left:1157.81px;top:118.00px;font-size:11.5px;line-height:15px;letter-spacing:0.013px;">Clear</span>
<span class="t" style="left:1232.18px;top:106.00px;font-size:11.5px;line-height:15px;letter-spacing:0.333px;">Sort &amp;</span>
<span class="t" style="left:1232.08px;top:122.00px;font-size:11.5px;line-height:15px;letter-spacing:0.174px;">Filter</span>
<span class="t" style="left:1273.93px;top:106.00px;font-size:11.5px;line-height:15px;letter-spacing:0.497px;">Find &amp;</span>
<span class="t" style="left:1271.43px;top:122.00px;font-size:11.5px;line-height:15px;letter-spacing:0.073px;">Select</span>
<span class="t" style="left:333.66px;top:79.00px;font-size:13px;line-height:17px;color:#505050;-webkit-text-stroke:0.3px #505050;">A</span>
<span class="t" style="left:356.40px;top:81.00px;font-size:10.8px;line-height:14px;color:#505050;-webkit-text-stroke:0.3px #505050;">A</span>
<span class="t" style="left:343.66px;top:108.00px;font-size:13.6px;line-height:18px;color:#555;-webkit-text-stroke:0.45px #555;">A</span>
</section>
<section class="formulabar" aria-label="Formula bar">
<div style="position:absolute;left:5px;top:167px;width:102px;height:26px;background:#fff;box-sizing:border-box;border:1px solid #c6c6c6;"></div>
<div style="position:absolute;left:137px;top:167px;width:110px;height:26px;background:#fff;box-sizing:border-box;border:1px solid #c6c6c6;"></div>
<div style="position:absolute;left:250px;top:167px;width:1111px;height:26px;background:#fff;box-sizing:border-box;border:1px solid #c6c6c6;"></div>
<svg style="left:92px;top:176px" width="10" height="6" viewBox="0 0 10 6"><path d="M1.2 1.2 H8 L4.6 5 Z" fill="#666"/></svg>
<div style="position:absolute;left:121px;top:175px;width:2px;height:2px;background:#a6a6a6;"></div>
<div style="position:absolute;left:121px;top:179.5px;width:2px;height:2px;background:#a6a6a6;"></div>
<div style="position:absolute;left:121px;top:184px;width:2px;height:2px;background:#a6a6a6;"></div>
<svg style="left:150px;top:175px" width="12" height="11" viewBox="0 0 12 11"><path d="M1.4 1 L10.4 10 M10.4 1 L1.4 10" stroke="#b4b4b4" stroke-width="1.5" fill="none"/></svg>
<svg style="left:186px;top:174px" width="13" height="12" viewBox="0 0 13 12"><path d="M1 6.6 L4.8 10.4 L11.8 1.4" stroke="#b4b4b4" stroke-width="1.7" fill="none"/></svg>
<svg style="left:1348px;top:176px" width="9" height="7" viewBox="0 0 9 7"><path d="M1.2 1.4 L4.5 4.8 L7.8 1.4" stroke="#555" stroke-width="1.7" fill="none"/></svg>
<span class="t" style="left:11.52px;top:172.00px;font-size:13px;line-height:17px;letter-spacing:0.964px;">A2</span>
<span class="t" style="left:261.22px;top:172.00px;font-size:13px;line-height:17px;letter-spacing:-0.250px;transform:scaleX(0.9360);transform-origin:0 50%;color:#444;">BARBER SHOP</span>
<span class="t" style="left:223.66px;top:170.00px;font-size:14px;line-height:18px;font-weight:700;font-style:italic;color:#444;font-family:'Liberation Serif',serif;">f</span>
<span class="t" style="left:228.18px;top:174.00px;font-size:10.5px;line-height:14px;font-weight:700;font-style:italic;color:#444;font-family:'Liberation Serif',serif;">x</span>
</section>
<main class="grid" aria-label="Worksheet grid">
<div style="position:absolute;left:26px;top:223px;width:1319px;height:456px;background:#fff;"></div>
<div style="position:absolute;left:26px;top:223px;width:685px;height:25px;background:#c4bd97;"></div>
<div style="position:absolute;left:26px;top:248px;width:685px;height:22px;background:#c4d79b;"></div>
<div style="position:absolute;left:267px;top:247px;width:232px;height:3px;background:#4f81bd;"></div>
<div style="position:absolute;left:267px;top:270px;width:1px;height:409px;background:#d4d4d4;"></div>
<div style="position:absolute;left:498px;top:270px;width:1px;height:409px;background:#d4d4d4;"></div>
<div style="position:absolute;left:632px;top:270px;width:1px;height:409px;background:#d4d4d4;"></div>
<div style="position:absolute;left:710px;top:270px;width:1px;height:409px;background:#d4d4d4;"></div>
<div style="position:absolute;left:774px;top:223px;width:1px;height:456px;background:#d4d4d4;"></div>
<div style="position:absolute;left:838px;top:223px;width:1px;height:456px;background:#d4d4d4;"></div>
<div style="position:absolute;left:902px;top:223px;width:1px;height:456px;background:#d4d4d4;"></div>
<div style="position:absolute;left:966px;top:223px;width:1px;height:456px;background:#d4d4d4;"></div>
<div style="position:absolute;left:1030px;top:223px;width:1px;height:456px;background:#d4d4d4;"></div>
<div style="position:absolute;left:1094px;top:223px;width:1px;height:456px;background:#d4d4d4;"></div>
<div style="position:absolute;left:1158px;top:223px;width:1px;height:456px;background:#d4d4d4;"></div>
<div style="position:absolute;left:1222px;top:223px;width:1px;height:456px;background:#d4d4d4;"></div>
<div style="position:absolute;left:1286px;top:223px;width:1px;height:456px;background:#d4d4d4;"></div>
<div style="position:absolute;left:1344px;top:223px;width:1px;height:456px;background:#d4d4d4;"></div>
<div style="position:absolute;left:711px;top:248px;width:634px;height:1px;background:#d4d4d4;"></div>
<div style="position:absolute;left:711px;top:269px;width:634px;height:1px;background:#d4d4d4;"></div>
<div style="position:absolute;left:26px;top:289px;width:1319px;height:1px;background:#d4d4d4;"></div>
<div style="position:absolute;left:26px;top:309px;width:1319px;height:1px;background:#d4d4d4;"></div>
<div style="position:absolute;left:26px;top:329px;width:1319px;height:1px;background:#d4d4d4;"></div>
<div style="position:absolute;left:26px;top:349px;width:1319px;height:1px;background:#d4d4d4;"></div>
<div style="position:absolute;left:26px;top:369px;width:1319px;height:1px;background:#d4d4d4;"></div>
<div style="position:absolute;left:26px;top:389px;width:1319px;height:1px;background:#d4d4d4;"></div>
<div style="position:absolute;left:26px;top:409px;width:1319px;height:1px;background:#d4d4d4;"></div>
<div style="position:absolute;left:26px;top:429px;width:1319px;height:1px;background:#d4d4d4;"></div>
<div style="position:absolute;left:26px;top:449px;width:1319px;height:1px;background:#d4d4d4;"></div>
<div style="position:absolute;left:26px;top:469px;width:1319px;height:1px;background:#d4d4d4;"></div>
<div style="position:absolute;left:26px;top:489px;width:1319px;height:1px;background:#d4d4d4;"></div>
<div style="position:absolute;left:26px;top:509px;width:1319px;height:1px;background:#d4d4d4;"></div>
<div style="position:absolute;left:26px;top:529px;width:1319px;height:1px;background:#d4d4d4;"></div>
<div style="position:absolute;left:26px;top:549px;width:1319px;height:1px;background:#d4d4d4;"></div>
<div style="position:absolute;left:26px;top:569px;width:1319px;height:1px;background:#d4d4d4;"></div>
<div style="position:absolute;left:26px;top:589px;width:1319px;height:1px;background:#d4d4d4;"></div>
<div style="position:absolute;left:26px;top:609px;width:1319px;height:1px;background:#d4d4d4;"></div>
<div style="position:absolute;left:26px;top:629px;width:1319px;height:1px;background:#d4d4d4;"></div>
<div style="position:absolute;left:26px;top:649px;width:1319px;height:1px;background:#d4d4d4;"></div>
<div style="position:absolute;left:26px;top:669px;width:1319px;height:1px;background:#d4d4d4;"></div>
<div style="position:absolute;left:0px;top:222px;width:1345px;height:1px;background:#9e9e9e;"></div>
<div style="position:absolute;left:25px;top:203px;width:1px;height:476px;background:#a6a6a6;"></div>
<div style="position:absolute;left:0px;top:678px;width:1346px;height:1px;background:#ababab;"></div>
<div style="position:absolute;left:1344px;top:223px;width:1px;height:456px;background:#ababab;"></div>
<div style="position:absolute;left:267px;top:204px;width:1px;height:18px;background:#c4c4c4;"></div>
<div style="position:absolute;left:498px;top:204px;width:1px;height:18px;background:#c4c4c4;"></div>
<div style="position:absolute;left:632px;top:204px;width:1px;height:18px;background:#c4c4c4;"></div>
<div style="position:absolute;left:710px;top:204px;width:1px;height:18px;background:#c4c4c4;"></div>
<div style="position:absolute;left:774px;top:204px;width:1px;height:18px;background:#c4c4c4;"></div>
<div style="position:absolute;left:838px;top:204px;width:1px;height:18px;background:#c4c4c4;"></div>
<div style="position:absolute;left:902px;top:204px;width:1px;height:18px;background:#c4c4c4;"></div>
<div style="position:absolute;left:966px;top:204px;width:1px;height:18px;background:#c4c4c4;"></div>
<div style="position:absolute;left:1030px;top:204px;width:1px;height:18px;background:#c4c4c4;"></div>
<div style="position:absolute;left:1094px;top:204px;width:1px;height:18px;background:#c4c4c4;"></div>
<div style="position:absolute;left:1158px;top:204px;width:1px;height:18px;background:#c4c4c4;"></div>
<div style="position:absolute;left:1222px;top:204px;width:1px;height:18px;background:#c4c4c4;"></div>
<div style="position:absolute;left:1286px;top:204px;width:1px;height:18px;background:#c4c4c4;"></div>
<div style="position:absolute;left:0px;top:248px;width:25px;height:1px;background:#c4c4c4;"></div>
<div style="position:absolute;left:0px;top:269px;width:25px;height:1px;background:#c4c4c4;"></div>
<div style="position:absolute;left:0px;top:289px;width:25px;height:1px;background:#c4c4c4;"></div>
<div style="position:absolute;left:0px;top:309px;width:25px;height:1px;background:#c4c4c4;"></div>
<div style="position:absolute;left:0px;top:329px;width:25px;height:1px;background:#c4c4c4;"></div>
<div style="position:absolute;left:0px;top:349px;width:25px;height:1px;background:#c4c4c4;"></div>
<div style="position:absolute;left:0px;top:369px;width:25px;height:1px;background:#c4c4c4;"></div>
<div style="position:absolute;left:0px;top:389px;width:25px;height:1px;background:#c4c4c4;"></div>
<div style="position:absolute;left:0px;top:409px;width:25px;height:1px;background:#c4c4c4;"></div>
<div style="position:absolute;left:0px;top:429px;width:25px;height:1px;background:#c4c4c4;"></div>
<div style="position:absolute;left:0px;top:449px;width:25px;height:1px;background:#c4c4c4;"></div>
<div style="position:absolute;left:0px;top:469px;width:25px;height:1px;background:#c4c4c4;"></div>
<div style="position:absolute;left:0px;top:489px;width:25px;height:1px;background:#c4c4c4;"></div>
<div style="position:absolute;left:0px;top:509px;width:25px;height:1px;background:#c4c4c4;"></div>
<div style="position:absolute;left:0px;top:529px;width:25px;height:1px;background:#c4c4c4;"></div>
<div style="position:absolute;left:0px;top:549px;width:25px;height:1px;background:#c4c4c4;"></div>
<div style="position:absolute;left:0px;top:569px;width:25px;height:1px;background:#c4c4c4;"></div>
<div style="position:absolute;left:0px;top:589px;width:25px;height:1px;background:#c4c4c4;"></div>
<div style="position:absolute;left:0px;top:609px;width:25px;height:1px;background:#c4c4c4;"></div>
<div style="position:absolute;left:0px;top:629px;width:25px;height:1px;background:#c4c4c4;"></div>
<div style="position:absolute;left:0px;top:649px;width:25px;height:1px;background:#c4c4c4;"></div>
<div style="position:absolute;left:0px;top:669px;width:25px;height:1px;background:#c4c4c4;"></div>
<svg style="left:9px;top:206px" width="14" height="14"><path d="M13 1.6 L13 12.8 L1.6 12.8 Z" fill="#b2b2b2"/></svg>
<div style="position:absolute;left:0;top:670px;width:25px;height:8px;overflow:hidden"><span class="t" style="left:4.5px;top:0px;font-size:13.3px;line-height:17px;color:#333;letter-spacing:-0.6px">23</span></div>
<div style="position:absolute;left:1348px;top:205px;width:15px;height:15px;background:#fff;box-sizing:border-box;border:1px solid #b4b4b4;"></div>
<div style="position:absolute;left:1348px;top:220px;width:15px;height:422px;background:#fff;box-sizing:border-box;border:1px solid #b4b4b4;"></div>
<div style="position:absolute;left:1348px;top:642px;width:15px;height:22px;background:#d9d9d9;"></div>
<div style="position:absolute;left:1348px;top:664px;width:15px;height:15px;background:#fff;box-sizing:border-box;border:1px solid #b4b4b4;"></div>
<svg style="left:1348px;top:205px" width="15" height="15"><path d="M3.5 9.5 L7.5 5 L11.5 9.5 Z" fill="#777"/></svg>
<svg style="left:1348px;top:664px" width="15" height="15"><path d="M3.5 5.5 L7.5 10 L11.5 5.5 Z" fill="#777"/></svg>
<span class="t" style="left:142.16px;top:204.00px;font-size:13px;line-height:17px;color:#222;">A</span>
<span class="t" style="left:378.66px;top:204.00px;font-size:13px;line-height:17px;color:#222;">B</span>
<span class="t" style="left:560.80px;top:204.00px;font-size:13px;line-height:17px;color:#222;">C</span>
<span class="t" style="left:666.80px;top:204.00px;font-size:13px;line-height:17px;color:#222;">D</span>
<span class="t" style="left:738.16px;top:204.00px;font-size:13px;line-height:17px;color:#222;">E</span>
<span class="t" style="left:802.52px;top:204.00px;font-size:13px;line-height:17px;color:#222;">F</span>
<span class="t" style="left:865.44px;top:204.00px;font-size:13px;line-height:17px;color:#222;">G</span>
<span class="t" style="left:929.80px;top:204.00px;font-size:13px;line-height:17px;color:#222;">H</span>
<span class="t" style="left:996.69px;top:204.00px;font-size:13px;line-height:17px;color:#222;">I</span>
<span class="t" style="left:1059.25px;top:204.00px;font-size:13px;line-height:17px;color:#222;">J</span>
<span class="t" style="left:1122.16px;top:204.00px;font-size:13px;line-height:17px;color:#222;">K</span>
<span class="t" style="left:1186.88px;top:204.00px;font-size:13px;line-height:17px;color:#222;">L</span>
<span class="t" style="left:1249.08px;top:204.00px;font-size:13px;line-height:17px;color:#222;">M</span>
<span class="t" style="left:1313.80px;top:204.00px;font-size:13px;line-height:17px;color:#222;">N</span>
<span class="t" style="left:8.80px;top:229.00px;font-size:13.3px;line-height:17px;color:#333;">1</span>
<span class="t" style="left:8.80px;top:252.00px;font-size:13.3px;line-height:17px;color:#333;">2</span>
<span class="t" style="left:8.80px;top:272.00px;font-size:13.3px;line-height:17px;color:#333;">3</span>
<span class="t" style="left:8.80px;top:292.00px;font-size:13.3px;line-height:17px;color:#333;">4</span>
<span class="t" style="left:8.80px;top:312.00px;font-size:13.3px;line-height:17px;color:#333;">5</span>
<span class="t" style="left:8.80px;top:332.00px;font-size:13.3px;line-height:17px;color:#333;">6</span>
<span class="t" style="left:8.80px;top:352.00px;font-size:13.3px;line-height:17px;color:#333;">7</span>
<span class="t" style="left:8.80px;top:372.00px;font-size:13.3px;line-height:17px;color:#333;">8</span>
<span class="t" style="left:8.80px;top:392.00px;font-size:13.3px;line-height:17px;color:#333;">9</span>
<span class="t" style="left:5.23px;top:412.00px;font-size:13.3px;line-height:17px;letter-spacing:-0.250px;transform:scaleX(0.9759);transform-origin:50% 50%;color:#333;">10</span>
<span class="t" style="left:5.40px;top:432.00px;font-size:13.3px;line-height:17px;letter-spacing:0.384px;color:#333;">11</span>
<span class="t" style="left:5.23px;top:452.00px;font-size:13.3px;line-height:17px;letter-spacing:-0.250px;transform:scaleX(0.9759);transform-origin:50% 50%;color:#333;">12</span>
<span class="t" style="left:5.23px;top:472.00px;font-size:13.3px;line-height:17px;letter-spacing:-0.250px;transform:scaleX(0.9759);transform-origin:50% 50%;color:#333;">13</span>
<span class="t" style="left:5.23px;top:492.00px;font-size:13.3px;line-height:17px;letter-spacing:-0.250px;transform:scaleX(0.9759);transform-origin:50% 50%;color:#333;">14</span>
<span class="t" style="left:5.23px;top:512.00px;font-size:13.3px;line-height:17px;letter-spacing:-0.250px;transform:scaleX(0.9759);transform-origin:50% 50%;color:#333;">15</span>
<span class="t" style="left:5.23px;top:532.00px;font-size:13.3px;line-height:17px;letter-spacing:-0.250px;transform:scaleX(0.9759);transform-origin:50% 50%;color:#333;">16</span>
<span class="t" style="left:5.23px;top:552.00px;font-size:13.3px;line-height:17px;letter-spacing:-0.250px;transform:scaleX(0.9759);transform-origin:50% 50%;color:#333;">17</span>
<span class="t" style="left:5.23px;top:572.00px;font-size:13.3px;line-height:17px;letter-spacing:-0.250px;transform:scaleX(0.9759);transform-origin:50% 50%;color:#333;">18</span>
<span class="t" style="left:5.23px;top:592.00px;font-size:13.3px;line-height:17px;letter-spacing:-0.250px;transform:scaleX(0.9759);transform-origin:50% 50%;color:#333;">19</span>
<span class="t" style="left:5.23px;top:612.00px;font-size:13.3px;line-height:17px;letter-spacing:-0.250px;transform:scaleX(0.9759);transform-origin:50% 50%;color:#333;">20</span>
<span class="t" style="left:5.23px;top:632.00px;font-size:13.3px;line-height:17px;letter-spacing:-0.250px;transform:scaleX(0.9759);transform-origin:50% 50%;color:#333;">21</span>
<span class="t" style="left:5.23px;top:652.00px;font-size:13.3px;line-height:17px;letter-spacing:-0.250px;transform:scaleX(0.9759);transform-origin:50% 50%;color:#333;">22</span>
<span class="t" style="left:270.78px;top:226.00px;font-size:17px;line-height:22px;letter-spacing:-0.250px;transform:scaleX(0.9449);transform-origin:0 50%;font-weight:700;color:#30568a;">Barber shop in ALBERT CITY</span>
<span class="t" style="left:27.80px;top:252.00px;font-size:13.3px;line-height:17px;letter-spacing:-0.250px;transform:scaleX(0.8896);transform-origin:0 50%;font-weight:700;color:#000;">BARBER SHOP</span>
<span class="t" style="left:296.70px;top:252.00px;font-size:13.3px;line-height:17px;letter-spacing:-0.250px;transform:scaleX(0.9832);transform-origin:0 50%;font-weight:700;color:#000;">EMAIL</span>
<span class="t" style="left:500.80px;top:252.00px;font-size:13.3px;line-height:17px;letter-spacing:-0.250px;transform:scaleX(0.9712);transform-origin:0 50%;font-weight:700;color:#000;">PHONE NO</span>
<span class="t" style="left:634.70px;top:252.00px;font-size:13.3px;line-height:17px;letter-spacing:-0.250px;transform:scaleX(0.9624);transform-origin:0 50%;font-weight:700;color:#000;">LOCATION</span>
<span class="t" style="left:27.80px;top:272.00px;font-size:13.4px;line-height:17px;letter-spacing:-0.076px;color:#000;">Suburbia Hair Spa</span>
<span class="t" style="left:500.80px;top:272.00px;font-size:13.4px;line-height:17px;letter-spacing:-0.250px;transform:scaleX(0.9986);transform-origin:0 50%;color:#000;">(780) 569-3888</span>
<span class="t" style="left:269.70px;top:272.00px;font-size:13.4px;line-height:17px;letter-spacing:0.232px;color:#000;">subrinahairspa.com</span>
<span class="t" style="left:634.70px;top:272.00px;font-size:13.4px;line-height:17px;letter-spacing:-0.250px;transform:scaleX(0.8932);transform-origin:0 50%;color:#000;">ALBERT</span>
<span class="t" style="left:27.80px;top:292.00px;font-size:13.4px;line-height:17px;letter-spacing:0.009px;color:#000;">CosMedics</span>
<span class="t" style="left:500.80px;top:292.00px;font-size:13.4px;line-height:17px;letter-spacing:-0.250px;transform:scaleX(0.9986);transform-origin:0 50%;color:#000;">(780) 428-9333</span>
<span class="t" style="left:269.70px;top:292.00px;font-size:13.4px;line-height:17px;letter-spacing:-0.029px;color:#000;">cosmedics.ca</span>
<span class="t" style="left:634.70px;top:292.00px;font-size:13.4px;line-height:17px;letter-spacing:-0.250px;transform:scaleX(0.8932);transform-origin:0 50%;color:#000;">ALBERT</span>
<span class="t" style="left:27.80px;top:312.00px;font-size:13.4px;line-height:17px;letter-spacing:0.014px;color:#000;">Bobby Pin Hair Lounge</span>
<span class="t" style="left:500.80px;top:312.00px;font-size:13.4px;line-height:17px;letter-spacing:-0.182px;color:#000;">(780) 428-8110</span>
<span class="t" style="left:269.70px;top:312.00px;font-size:13.4px;line-height:17px;letter-spacing:0.482px;color:#000;">bobbypinhairlonge.com</span>
<span class="t" style="left:634.70px;top:312.00px;font-size:13.4px;line-height:17px;letter-spacing:-0.250px;transform:scaleX(0.8932);transform-origin:0 50%;color:#000;">ALBERT</span>
<span class="t" style="left:27.80px;top:332.00px;font-size:13.4px;line-height:17px;letter-spacing:-0.105px;color:#000;">Barber Shop Boyz</span>
<span class="t" style="left:500.80px;top:332.00px;font-size:13.4px;line-height:17px;letter-spacing:-0.250px;transform:scaleX(0.9986);transform-origin:0 50%;color:#000;">(780) 569-5358</span>
<span class="t" style="left:269.70px;top:332.00px;font-size:13.4px;line-height:17px;letter-spacing:0.187px;color:#000;">barbershopboyz.ca</span>
<span class="t" style="left:634.70px;top:332.00px;font-size:13.4px;line-height:17px;letter-spacing:-0.250px;transform:scaleX(0.8932);transform-origin:0 50%;color:#000;">ALBERT</span>
<span class="t" style="left:27.80px;top:352.00px;font-size:13.4px;line-height:17px;letter-spacing:0.162px;color:#000;">Tommy Gun&#x27;s Original Barbershop</span>
<span class="t" style="left:500.80px;top:352.00px;font-size:13.4px;line-height:17px;letter-spacing:-0.250px;transform:scaleX(0.9986);transform-origin:0 50%;color:#000;">(780) 470-4144</span>
<span class="t" style="left:269.70px;top:352.00px;font-size:13.4px;line-height:17px;letter-spacing:0.406px;color:#000;">tommyguns.com</span>
<span class="t" style="left:634.70px;top:352.00px;font-size:13.4px;line-height:17px;letter-spacing:-0.250px;transform:scaleX(0.8932);transform-origin:0 50%;color:#000;">ALBERT</span>
<span class="t" style="left:27.80px;top:372.00px;font-size:13.4px;line-height:17px;letter-spacing:-0.180px;color:#000;">AJ Barber Shop</span>
<span class="t" style="left:500.80px;top:372.00px;font-size:13.4px;line-height:17px;letter-spacing:-0.250px;transform:scaleX(0.9986);transform-origin:0 50%;color:#000;">(780) 569-5363</span>
<span class="t" style="left:269.70px;top:372.00px;font-size:13.4px;line-height:17px;letter-spacing:0.212px;color:#000;">ajbarbershop.ca</span>
<span class="t" style="left:634.70px;top:372.00px;font-size:13.4px;line-height:17px;letter-spacing:-0.250px;transform:scaleX(0.8932);transform-origin:0 50%;color:#000;">ALBERT</span>
<span class="t" style="left:27.80px;top:392.00px;font-size:13.4px;line-height:17px;letter-spacing:0.111px;color:#000;">Ultracuts Professional Haircare Centres</span>
<span class="t" style="left:500.80px;top:392.00px;font-size:13.4px;line-height:17px;letter-spacing:-0.250px;transform:scaleX(0.9986);transform-origin:0 50%;color:#000;">(780) 458-0783</span>
<span class="t" style="left:269.70px;top:392.00px;font-size:13.4px;line-height:17px;letter-spacing:0.247px;color:#000;">ultracuts.ca</span>
<span class="t" style="left:634.70px;top:392.00px;font-size:13.4px;line-height:17px;letter-spacing:-0.250px;transform:scaleX(0.8932);transform-origin:0 50%;color:#000;">ALBERT</span>
<span class="t" style="left:27.80px;top:412.00px;font-size:13.4px;line-height:17px;letter-spacing:-0.053px;color:#000;">Fresh Fades Barbershop</span>
<span class="t" style="left:500.80px;top:412.00px;font-size:13.4px;line-height:17px;letter-spacing:-0.250px;transform:scaleX(0.9986);transform-origin:0 50%;color:#000;">(780) 760-2887</span>
<span class="t" style="left:269.70px;top:412.00px;font-size:13.4px;line-height:17px;letter-spacing:0.417px;color:#000;">fresh-fades-barbershop-ltd.bus</span>
<span class="t" style="left:634.70px;top:412.00px;font-size:13.4px;line-height:17px;letter-spacing:-0.250px;transform:scaleX(0.8932);transform-origin:0 50%;color:#000;">ALBERT</span>
<span class="t" style="left:27.80px;top:432.00px;font-size:13.4px;line-height:17px;letter-spacing:-0.074px;color:#000;">Copper Shears Barber Shop</span>
<span class="t" style="left:500.80px;top:432.00px;font-size:13.4px;line-height:17px;letter-spacing:-0.182px;color:#000;">(587) 523-2211</span>
<span class="t" style="left:269.70px;top:432.00px;font-size:13.4px;line-height:17px;letter-spacing:0.177px;color:#000;">coppershears.com</span>
<span class="t" style="left:634.70px;top:432.00px;font-size:13.4px;line-height:17px;letter-spacing:-0.250px;transform:scaleX(0.8932);transform-origin:0 50%;color:#000;">ALBERT</span>
<span class="t" style="left:27.80px;top:452.00px;font-size:13.4px;line-height:17px;letter-spacing:0.115px;color:#000;">Mr. Barber School</span>
<span class="t" style="left:500.80px;top:452.00px;font-size:13.4px;line-height:17px;letter-spacing:-0.250px;transform:scaleX(0.9986);transform-origin:0 50%;color:#000;">(888) 966-0767</span>
<span class="t" style="left:269.70px;top:452.00px;font-size:13.4px;line-height:17px;letter-spacing:0.187px;color:#000;">barberschool.ca</span>
<span class="t" style="left:634.70px;top:452.00px;font-size:13.4px;line-height:17px;letter-spacing:-0.250px;transform:scaleX(0.8932);transform-origin:0 50%;color:#000;">ALBERT</span>
<span class="t" style="left:27.72px;top:471.00px;font-size:14.67px;line-height:19px;letter-spacing:0.112px;color:#4d4d4d;">King&#x27;s Crown</span>
<span class="t" style="left:501.12px;top:471.00px;font-size:14.67px;line-height:19px;letter-spacing:-0.070px;color:#4d4d4d;">(647) 348-1774</span>
<span class="t" style="left:269.70px;top:472.00px;font-size:13.4px;line-height:17px;letter-spacing:0.112px;color:#000;">kingscrown1774.com</span>
<span class="t" style="left:634.70px;top:472.00px;font-size:13.4px;line-height:17px;letter-spacing:-0.250px;transform:scaleX(0.8932);transform-origin:0 50%;color:#000;">ALBERT</span>
<span class="t" style="left:27.80px;top:492.00px;font-size:13.4px;line-height:17px;letter-spacing:-0.003px;color:#000;">Blade 6</span>
<span class="t" style="left:500.80px;top:492.00px;font-size:13.4px;line-height:17px;letter-spacing:-0.250px;transform:scaleX(0.9986);transform-origin:0 50%;color:#000;">(647) 551-0476</span>
<span class="t" style="left:269.70px;top:492.00px;font-size:13.4px;line-height:17px;letter-spacing:0.091px;color:#000;">blade6.ca</span>
<span class="t" style="left:634.70px;top:492.00px;font-size:13.4px;line-height:17px;letter-spacing:-0.250px;transform:scaleX(0.8932);transform-origin:0 50%;color:#000;">ALBERT</span>
<span class="t" style="left:27.80px;top:512.00px;font-size:13.4px;line-height:17px;letter-spacing:-0.250px;transform:scaleX(0.9312);transform-origin:0 50%;color:#000;">CHAPS &amp; FADES</span>
<span class="t" style="left:500.80px;top:512.00px;font-size:13.4px;line-height:17px;letter-spacing:-0.250px;transform:scaleX(0.9986);transform-origin:0 50%;color:#000;">(647) 349-2427</span>
<span class="t" style="left:269.70px;top:512.00px;font-size:13.4px;line-height:17px;letter-spacing:0.128px;color:#000;">chapsandfades.com</span>
<span class="t" style="left:634.70px;top:512.00px;font-size:13.4px;line-height:17px;letter-spacing:-0.250px;transform:scaleX(0.8932);transform-origin:0 50%;color:#000;">ALBERT</span>
<span class="t" style="left:27.80px;top:532.00px;font-size:13.4px;line-height:17px;letter-spacing:0.137px;color:#000;">Platinum Hair Designs</span>
<span class="t" style="left:500.80px;top:532.00px;font-size:13.4px;line-height:17px;letter-spacing:-0.250px;transform:scaleX(0.9986);transform-origin:0 50%;color:#000;">(416) 255-7017</span>
<span class="t" style="left:269.70px;top:532.00px;font-size:13.4px;line-height:17px;letter-spacing:0.132px;color:#000;">Platinum Hair Designs</span>
<span class="t" style="left:634.70px;top:532.00px;font-size:13.4px;line-height:17px;letter-spacing:-0.250px;transform:scaleX(0.8932);transform-origin:0 50%;color:#000;">ALBERT</span>
<span class="t" style="left:27.80px;top:552.00px;font-size:13.4px;line-height:17px;letter-spacing:0.019px;color:#000;">K&amp;M Barber Shop</span>
<span class="t" style="left:500.80px;top:552.00px;font-size:13.4px;line-height:17px;letter-spacing:-0.250px;transform:scaleX(0.9986);transform-origin:0 50%;color:#000;">(647) 347-4447</span>
<span class="t" style="left:269.70px;top:552.00px;font-size:13.4px;line-height:17px;letter-spacing:0.263px;color:#000;">Kmbarbershop.com</span>
<span class="t" style="left:634.70px;top:552.00px;font-size:13.4px;line-height:17px;letter-spacing:-0.250px;transform:scaleX(0.8932);transform-origin:0 50%;color:#000;">ALBERT</span>
<span class="t" style="left:27.80px;top:572.00px;font-size:13.4px;line-height:17px;letter-spacing:-0.036px;color:#000;">Nicks Barber Salon</span>
<span class="t" style="left:500.80px;top:572.00px;font-size:13.4px;line-height:17px;letter-spacing:-0.250px;transform:scaleX(0.9986);transform-origin:0 50%;color:#000;">(416) 255-9757</span>
<span class="t" style="left:269.70px;top:572.00px;font-size:13.4px;line-height:17px;letter-spacing:-0.042px;color:#000;">Nicks Barber Salon</span>
<span class="t" style="left:634.70px;top:572.00px;font-size:13.4px;line-height:17px;letter-spacing:-0.250px;transform:scaleX(0.8932);transform-origin:0 50%;color:#000;">ALBERT</span>
<span class="t" style="left:27.80px;top:592.00px;font-size:13.4px;line-height:17px;letter-spacing:0.124px;color:#000;">Queensway Barbers</span>
<span class="t" style="left:500.80px;top:592.00px;font-size:13.4px;line-height:17px;letter-spacing:-0.250px;transform:scaleX(0.9986);transform-origin:0 50%;color:#000;">(416) 255-9285</span>
<span class="t" style="left:269.70px;top:592.00px;font-size:13.4px;line-height:17px;letter-spacing:0.256px;color:#000;">Queenswaybarbers.com</span>
<span class="t" style="left:634.70px;top:592.00px;font-size:13.4px;line-height:17px;letter-spacing:-0.250px;transform:scaleX(0.8932);transform-origin:0 50%;color:#000;">ALBERT</span>
<span class="t" style="left:27.80px;top:612.00px;font-size:13.4px;line-height:17px;letter-spacing:-0.211px;color:#000;">Jacobs Barbers</span>
<span class="t" style="left:500.80px;top:612.00px;font-size:13.4px;line-height:17px;letter-spacing:-0.250px;transform:scaleX(0.9986);transform-origin:0 50%;color:#000;">(647) 688-3094</span>
<span class="t" style="left:269.70px;top:612.00px;font-size:13.4px;line-height:17px;letter-spacing:0.183px;color:#000;">jacobsbarber.ca</span>
<span class="t" style="left:634.70px;top:612.00px;font-size:13.4px;line-height:17px;letter-spacing:-0.250px;transform:scaleX(0.8932);transform-origin:0 50%;color:#000;">ALBERT</span>
<span class="t" style="left:27.80px;top:632.00px;font-size:13.4px;line-height:17px;letter-spacing:0.242px;color:#000;">Distinguished Gents</span>
<span class="t" style="left:500.80px;top:632.00px;font-size:13.4px;line-height:17px;letter-spacing:-0.250px;transform:scaleX(0.9986);transform-origin:0 50%;color:#000;">(647) 575-4368</span>
<span class="t" style="left:269.70px;top:632.00px;font-size:13.4px;line-height:17px;letter-spacing:0.355px;color:#000;">distinguishedgents.co</span>
<span class="t" style="left:634.70px;top:632.00px;font-size:13.4px;line-height:17px;letter-spacing:-0.250px;transform:scaleX(0.8932);transform-origin:0 50%;color:#000;">ALBERT</span>
<span class="t" style="left:27.80px;top:652.00px;font-size:13.4px;line-height:17px;letter-spacing:0.026px;color:#000;">Oti&#x27;s Hair Shop</span>
<span class="t" style="left:500.80px;top:652.00px;font-size:13.4px;line-height:17px;letter-spacing:-0.250px;transform:scaleX(0.9986);transform-origin:0 50%;color:#000;">(647) 748-5999</span>
<span class="t" style="left:269.70px;top:652.00px;font-size:13.4px;line-height:17px;letter-spacing:0.455px;color:#000;">otihairshop.com</span>
<span class="t" style="left:634.70px;top:652.00px;font-size:13.4px;line-height:17px;letter-spacing:-0.250px;transform:scaleX(0.8932);transform-origin:0 50%;color:#000;">ALBERT</span>
</main>
<section class="sheetbar" aria-label="Sheet tabs">
<div style="position:absolute;left:836px;top:685px;width:15px;height:15px;background:#fff;box-sizing:border-box;border:1px solid #b4b4b4;"></div>
<div style="position:absolute;left:851px;top:685px;width:442px;height:15px;background:#fff;box-sizing:border-box;border:1px solid #b4b4b4;"></div>
<div style="position:absolute;left:1293px;top:685px;width:37px;height:15px;background:#d9d9d9;"></div>
<div style="position:absolute;left:1330px;top:685px;width:15px;height:15px;background:#fff;box-sizing:border-box;border:1px solid #b4b4b4;"></div>
<svg style="left:836px;top:685px" width="15" height="15"><path d="M9.5 3.5 L5 7.5 L9.5 11.5 Z" fill="#555"/></svg>
<svg style="left:1330px;top:685px" width="15" height="15"><path d="M5.5 3.5 L10 7.5 L5.5 11.5 Z" fill="#555"/></svg>
<div style="position:absolute;left:165px;top:678px;width:66px;height:25px;background:#fff;box-sizing:border-box;border-left:1px solid #ababab;border-right:1px solid #ababab;"></div>
<div style="position:absolute;left:165px;top:701px;width:66px;height:2px;background:#217346;"></div>
<div style="position:absolute;left:100px;top:682px;width:1px;height:20px;background:#ababab;"></div>
<div style="position:absolute;left:294px;top:682px;width:1px;height:20px;background:#ababab;"></div>
<svg style="left:327px;top:683px" width="18" height="18"><circle cx="9" cy="9" r="7.5" fill="none" stroke="#6a6a6a" stroke-width="1.2"/><path d="M9 5v8M5 9h8" stroke="#6a6a6a" stroke-width="1.6"/></svg>
<svg style="left:24px;top:686px" width="40" height="12"><path d="M7 2 L3 6 L7 10 Z M31 2 L35 6 L31 10 Z" fill="#c0c0c0"/></svg>
<div style="position:absolute;left:818px;top:687px;width:2px;height:2px;background:#a6a6a6;"></div>
<div style="position:absolute;left:818px;top:691px;width:2px;height:2px;background:#a6a6a6;"></div>
<div style="position:absolute;left:818px;top:695px;width:2px;height:2px;background:#a6a6a6;"></div>
<span class="t" style="left:112.55px;top:684.00px;font-size:12.5px;line-height:16px;letter-spacing:-0.100px;color:#444;">Sheet1</span>
<span class="t" style="left:176.25px;top:684.00px;font-size:12.5px;line-height:16px;letter-spacing:0.225px;font-weight:700;color:#217346;">Sheet2</span>
<span class="t" style="left:242.25px;top:684.00px;font-size:12.5px;line-height:16px;letter-spacing:0.040px;color:#444;">Sheet3</span>
</section>
<footer class="statusbar" aria-label="Status bar">
<div style="position:absolute;left:0px;top:706px;width:1366px;height:20px;background:#f3f3f3;"></div>
<div style="position:absolute;left:0px;top:706px;width:1366px;height:1px;background:#d8d8d8;"></div>
<div style="position:absolute;left:1066px;top:707px;width:40px;height:19px;background:#c6c6c6;"></div>
<div style="position:absolute;left:1205px;top:717px;width:100px;height:1px;background:#a0a0a0;"></div>
<div style="position:absolute;left:1253px;top:711px;width:5px;height:11px;background:#666;"></div>
<div style="position:absolute;left:1192px;top:716px;width:8px;height:1.2px;background:#555;"></div>
<div style="position:absolute;left:1310px;top:717px;width:8px;height:1px;background:#555;"></div>
<div style="position:absolute;left:1313.5px;top:713px;width:1px;height:9px;background:#555;"></div>
<svg style="left:1079px;top:710px" width="14" height="14" viewBox="0 0 14 14"><rect x="0.5" y="0.5" width="12" height="12" fill="none" stroke="#666" stroke-width="1"/><path d="M4.5 0.5 V12.5 M8.5 0.5 V12.5 M0.5 4.5 H12.5 M0.5 8.5 H12.5" stroke="#666" stroke-width="1"/></svg>
<svg style="left:1119px;top:710px" width="15" height="14" viewBox="0 0 15 14"><rect x="0.5" y="0.5" width="13" height="12" fill="#fafafa" stroke="#666" stroke-width="1"/><rect x="3.5" y="3.5" width="7" height="6" fill="none" stroke="#666" stroke-width="1"/><path d="M5 5.5 H9 M5 7.5 H9" stroke="#666" stroke-width="0.8"/></svg>
<svg style="left:1159px;top:710px" width="15" height="14" viewBox="0 0 15 14"><rect x="0.5" y="0.5" width="13" height="12" fill="#fafafa" stroke="#666" stroke-width="1"/><path d="M3.5 0.5 V7.5 H7.5 M7.5 0.5 V7.5" stroke="#666" stroke-width="1" fill="none"/></svg>
<span class="t" style="left:1331.28px;top:708.00px;font-size:12px;line-height:16px;letter-spacing:-0.250px;transform:scaleX(0.8974);transform-origin:0 50%;color:#444;">100%</span>
</footer>
</body></html>
